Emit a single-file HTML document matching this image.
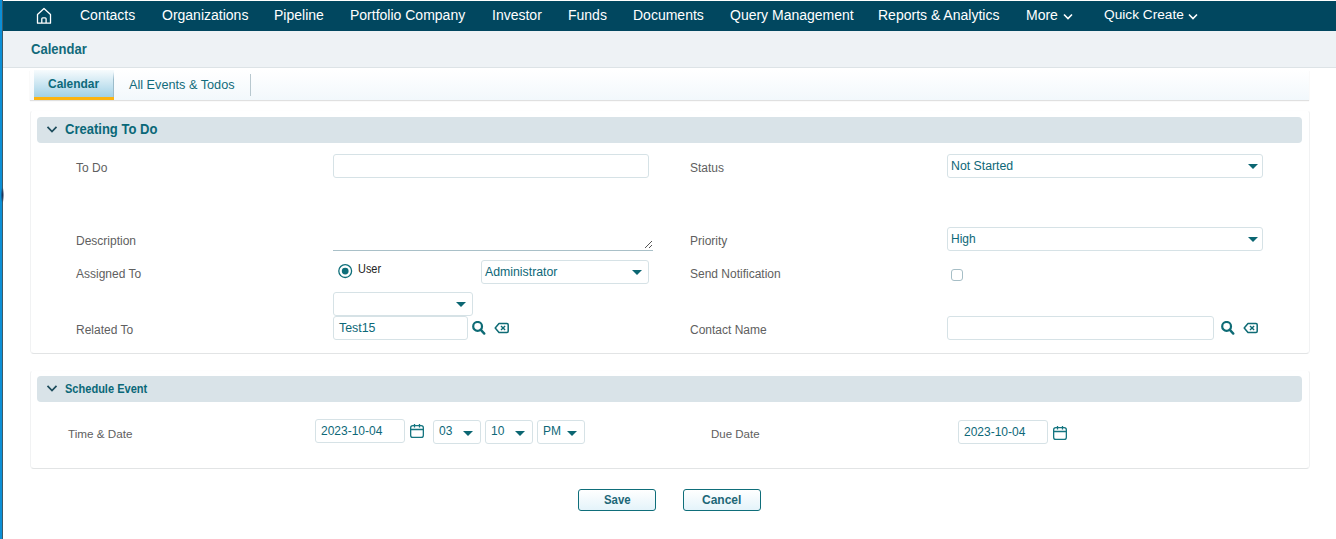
<!DOCTYPE html>
<html><head><meta charset="utf-8">
<style>
*{box-sizing:border-box;margin:0;padding:0}
html,body{width:1336px;height:539px;overflow:hidden;background:#fff;font-family:"Liberation Sans",sans-serif;position:relative}
.a{position:absolute;white-space:nowrap}
#lb{left:0;top:0;width:2px;height:539px;background:#0b8fd6}
#lb2{left:2px;top:0;width:1px;height:539px;background:#3d5a66}
#nav{left:3px;top:1px;width:1333px;height:30px;background:#01475f}
.nv{color:#fff;font-size:14px;top:7px;line-height:16px}
#hdr{left:3px;top:31px;width:1333px;height:37px;background:#eef2f5;border-bottom:1px solid #dde3e6}
#hdrt{left:31px;top:41px;font-size:14px;font-weight:bold;color:#126a7a;line-height:16px;transform:scaleX(0.93);transform-origin:0 0}
#tabbar{left:30px;top:70px;width:1279px;height:30px;background:linear-gradient(#fff,#f2f8fc);box-shadow:0 1px 1px rgba(0,0,0,0.12)}
#tab1{left:34px;top:70px;width:80px;height:30px;background:linear-gradient(#f7fbfd,#a2d2e7);border-bottom:3px solid #fbb412}
#tab1t{left:48px;top:76px;font-size:13px;font-weight:bold;color:#0d6a7b;line-height:16px;transform:scaleX(0.92);transform-origin:0 0}
#tab2t{left:129px;top:77px;font-size:12.7px;color:#126b7c;line-height:16px}
#tabsep{left:250px;top:74px;width:1px;height:22px;background:#b8c8cf}
.box{left:30px;width:1280px;border:1px solid #f1f2f3;border-top-color:#fefefe;border-bottom-color:#e2e4e5;border-radius:4px}
.band{left:37px;width:1265px;height:26px;background:#d9e3e8;border-radius:4px}
.bt{font-weight:bold;color:#0a6878;line-height:16px}
.lbl{font-size:12px;color:#606060;line-height:14px}
.inp{border:1px solid #d6e2e6;border-radius:3px;height:24px;background:#fff}
.val{font-size:12px;color:#0d6878;line-height:14px}
.car{width:0;height:0;border-left:5px solid transparent;border-right:5px solid transparent;border-top:5px solid #0b6672}
.btn{height:22px;width:78px;border:1px solid #0f6e7a;border-radius:3px;background:linear-gradient(#fff,#e4f3fa)}
.btt{font-size:12px;font-weight:bold;color:#1d6777;line-height:14px}
</style></head><body>
<div class="a" id="lb"></div><div class="a" id="lb2"></div><div class="a" style="left:0;top:184px;width:4px;height:22px;background:radial-gradient(ellipse 2px 8px at 2.5px 11px,#1a2f55,rgba(26,47,85,0))"></div>
<div class="a" id="nav"></div>
<svg class="a" style="left:36px;top:7px" width="16" height="18" viewBox="0 0 16 18"><path d="M1.5 16.2V7.5L8 1.5L14.5 7.5V16.2Z M5.8 16.2V11.8Q5.8 10.8 6.8 10.8H9.1Q10.1 10.8 10.1 11.8V16.2" fill="none" stroke="#fff" stroke-width="1.3" stroke-linejoin="round"/></svg>
<div class="a nv" style="left:80px">Contacts</div>
<div class="a nv" style="left:162px">Organizations</div>
<div class="a nv" style="left:274px">Pipeline</div>
<div class="a nv" style="left:350px">Portfolio Company</div>
<div class="a nv" style="left:492px">Investor</div>
<div class="a nv" style="left:568px">Funds</div>
<div class="a nv" style="left:633px">Documents</div>
<div class="a nv" style="left:730px">Query Management</div>
<div class="a nv" style="left:878px">Reports &amp; Analytics</div>
<div class="a nv" style="left:1026px">More</div>
<svg class="a" style="left:1063px;top:13px" width="10" height="7" viewBox="0 0 10 7"><path d="M1 1.5L5 5.5L9 1.5" fill="none" stroke="#fff" stroke-width="1.6"/></svg>
<div class="a nv" style="left:1104px;font-size:13.7px">Quick Create</div>
<svg class="a" style="left:1188px;top:13px" width="10" height="7" viewBox="0 0 10 7"><path d="M1 1.5L5 5.5L9 1.5" fill="none" stroke="#fff" stroke-width="1.6"/></svg>

<div class="a" id="hdr"></div>
<div class="a" id="hdrt">Calendar</div>

<div class="a" id="tabbar"></div>
<div class="a" id="tab1"></div>
<div class="a" style="left:113px;top:72px;width:1px;height:25px;background:linear-gradient(rgba(156,188,203,0),#9cbccb 30%)"></div>
<div class="a" id="tab1t">Calendar</div>
<div class="a" id="tab2t">All Events &amp; Todos</div>
<div class="a" id="tabsep"></div>

<!-- section 1 -->
<div class="a box" style="top:110px;height:244px"></div>
<div class="a band" style="top:117px"></div>
<svg class="a" style="left:46px;top:125px" width="12" height="9" viewBox="0 0 12 9"><path d="M1.5 1.8L6 6.5L10.5 1.8" fill="none" stroke="#1d4c5c" stroke-width="1.7"/></svg>
<div class="a bt" style="left:65px;top:121px;font-size:14px;transform:scaleX(0.93);transform-origin:0 0">Creating To Do</div>

<div class="a lbl" style="left:76px;top:161px">To Do</div>
<div class="a inp" style="left:333px;top:154px;width:316px"></div>
<div class="a lbl" style="left:690px;top:161px">Status</div>
<div class="a inp" style="left:947px;top:154px;width:316px"></div>
<div class="a val" style="left:951px;top:159px;font-size:12.3px">Not Started</div>
<div class="a car" style="left:1248px;top:164px"></div>

<div class="a lbl" style="left:76px;top:234px">Description</div>
<div class="a" style="left:333px;top:250px;width:320px;height:1px;background:#a9c0c8"></div>
<svg class="a" style="left:644px;top:240px" width="9" height="9" viewBox="0 0 9 9"><path d="M1 8L8 1M5 8L8 5" stroke="#555" stroke-width="1"/></svg>
<div class="a lbl" style="left:690px;top:234px">Priority</div>
<div class="a inp" style="left:947px;top:227px;width:316px"></div>
<div class="a val" style="left:951px;top:232px">High</div>
<div class="a car" style="left:1248px;top:237px"></div>

<div class="a lbl" style="left:76px;top:267px">Assigned To</div>
<svg class="a" style="left:337px;top:263px" width="16" height="16" viewBox="0 0 16 16"><circle cx="8.2" cy="8.1" r="6.4" fill="#fff" stroke="#0e6f7a" stroke-width="1.3"/><circle cx="8.2" cy="8.1" r="3.4" fill="#0e6f7a"/></svg>
<div class="a" style="left:358px;top:262px;font-size:12px;color:#222;line-height:14px;transform:scaleX(0.91);transform-origin:0 0">User</div>
<div class="a inp" style="left:481px;top:260px;width:168px"></div>
<div class="a val" style="left:485px;top:265px;font-size:12.3px">Administrator</div>
<div class="a car" style="left:632px;top:270px"></div>
<div class="a lbl" style="left:690px;top:267px">Send Notification</div>
<div class="a" style="left:951px;top:269px;width:12px;height:12px;border:1px solid #a6bec6;border-radius:3px;background:#fff"></div>

<div class="a inp" style="left:333px;top:292px;width:140px"></div>
<div class="a car" style="left:456px;top:302px"></div>

<div class="a lbl" style="left:76px;top:323px">Related To</div>
<div class="a inp" style="left:333px;top:316px;width:135px"></div>
<div class="a val" style="left:339px;top:321px;font-size:12.4px">Test15</div>
<svg class="a" style="left:472px;top:321px" width="14" height="15" viewBox="0 0 14 15"><circle cx="5.6" cy="5.4" r="4.4" fill="none" stroke="#0e6b75" stroke-width="2.2"/><path d="M8.6 8.7L12.3 12.6" stroke="#0e6b75" stroke-width="2.4" stroke-linecap="round"/></svg>
<svg class="a" style="left:494px;top:322px" width="16" height="12" viewBox="0 0 16 12"><path d="M5 1.5H13Q14.2 1.5 14.2 2.7V9.3Q14.2 10.5 13 10.5H5L1.2 6Z" fill="none" stroke="#0e6b75" stroke-width="1.5" stroke-linejoin="round"/><path d="M7 3.9L11.1 8M11.1 3.9L7 8" stroke="#0e6b75" stroke-width="1.35"/></svg>
<div class="a lbl" style="left:690px;top:323px">Contact Name</div>
<div class="a inp" style="left:947px;top:316px;width:267px"></div>
<svg class="a" style="left:1221px;top:321px" width="14" height="15" viewBox="0 0 14 15"><circle cx="5.6" cy="5.4" r="4.4" fill="none" stroke="#0e6b75" stroke-width="2.2"/><path d="M8.6 8.7L12.3 12.6" stroke="#0e6b75" stroke-width="2.4" stroke-linecap="round"/></svg>
<svg class="a" style="left:1243px;top:322px" width="16" height="12" viewBox="0 0 16 12"><path d="M5 1.5H13Q14.2 1.5 14.2 2.7V9.3Q14.2 10.5 13 10.5H5L1.2 6Z" fill="none" stroke="#0e6b75" stroke-width="1.5" stroke-linejoin="round"/><path d="M7 3.9L11.1 8M11.1 3.9L7 8" stroke="#0e6b75" stroke-width="1.35"/></svg>

<!-- section 2 -->
<div class="a box" style="top:370px;height:99px"></div>
<div class="a band" style="top:376px"></div>
<svg class="a" style="left:46px;top:384px" width="12" height="9" viewBox="0 0 12 9"><path d="M1.5 1.8L6 6.5L10.5 1.8" fill="none" stroke="#1d4c5c" stroke-width="1.7"/></svg>
<div class="a bt" style="left:65px;top:381px;font-size:12px;transform:scaleX(0.92);transform-origin:0 0">Schedule Event</div>

<div class="a lbl" style="left:68px;top:426.5px;font-size:11.7px">Time &amp; Date</div>
<div class="a inp" style="left:315px;top:419px;width:90px"></div>
<div class="a val" style="left:321px;top:424px">2023-10-04</div>
<svg class="a" style="left:410px;top:423px" width="14" height="15" viewBox="0 0 14 15"><rect x="0.65" y="2.65" width="12.7" height="11.7" rx="2.2" fill="none" stroke="#157580" stroke-width="1.3"/><path d="M0.6 6.5H13.4M4.5 1.1V4.6M9.5 1.1V4.6" stroke="#157580" stroke-width="1.3"/></svg>
<div class="a inp" style="left:433px;top:420px;width:48px"></div>
<div class="a val" style="left:439px;top:424px">03</div>
<div class="a car" style="left:463px;top:431px"></div>
<div class="a inp" style="left:485px;top:420px;width:48px"></div>
<div class="a val" style="left:491px;top:424px">10</div>
<div class="a car" style="left:515px;top:431px"></div>
<div class="a inp" style="left:537px;top:420px;width:48px"></div>
<div class="a val" style="left:543px;top:424px">PM</div>
<div class="a car" style="left:567px;top:431px"></div>

<div class="a lbl" style="left:711px;top:427px;font-size:11.5px">Due Date</div>
<div class="a inp" style="left:958px;top:420px;width:90px"></div>
<div class="a val" style="left:964px;top:425px">2023-10-04</div>
<svg class="a" style="left:1053px;top:425px" width="14" height="15" viewBox="0 0 14 15"><rect x="0.65" y="2.65" width="12.7" height="11.7" rx="2.2" fill="none" stroke="#157580" stroke-width="1.3"/><path d="M0.6 6.5H13.4M4.5 1.1V4.6M9.5 1.1V4.6" stroke="#157580" stroke-width="1.3"/></svg>

<div class="a btn" style="left:578px;top:489px"></div>
<div class="a btt" style="left:604px;top:493px;transform:scaleX(0.95);transform-origin:0 0">Save</div>
<div class="a btn" style="left:683px;top:489px"></div>
<div class="a btt" style="left:702px;top:493px">Cancel</div>
</body></html>
